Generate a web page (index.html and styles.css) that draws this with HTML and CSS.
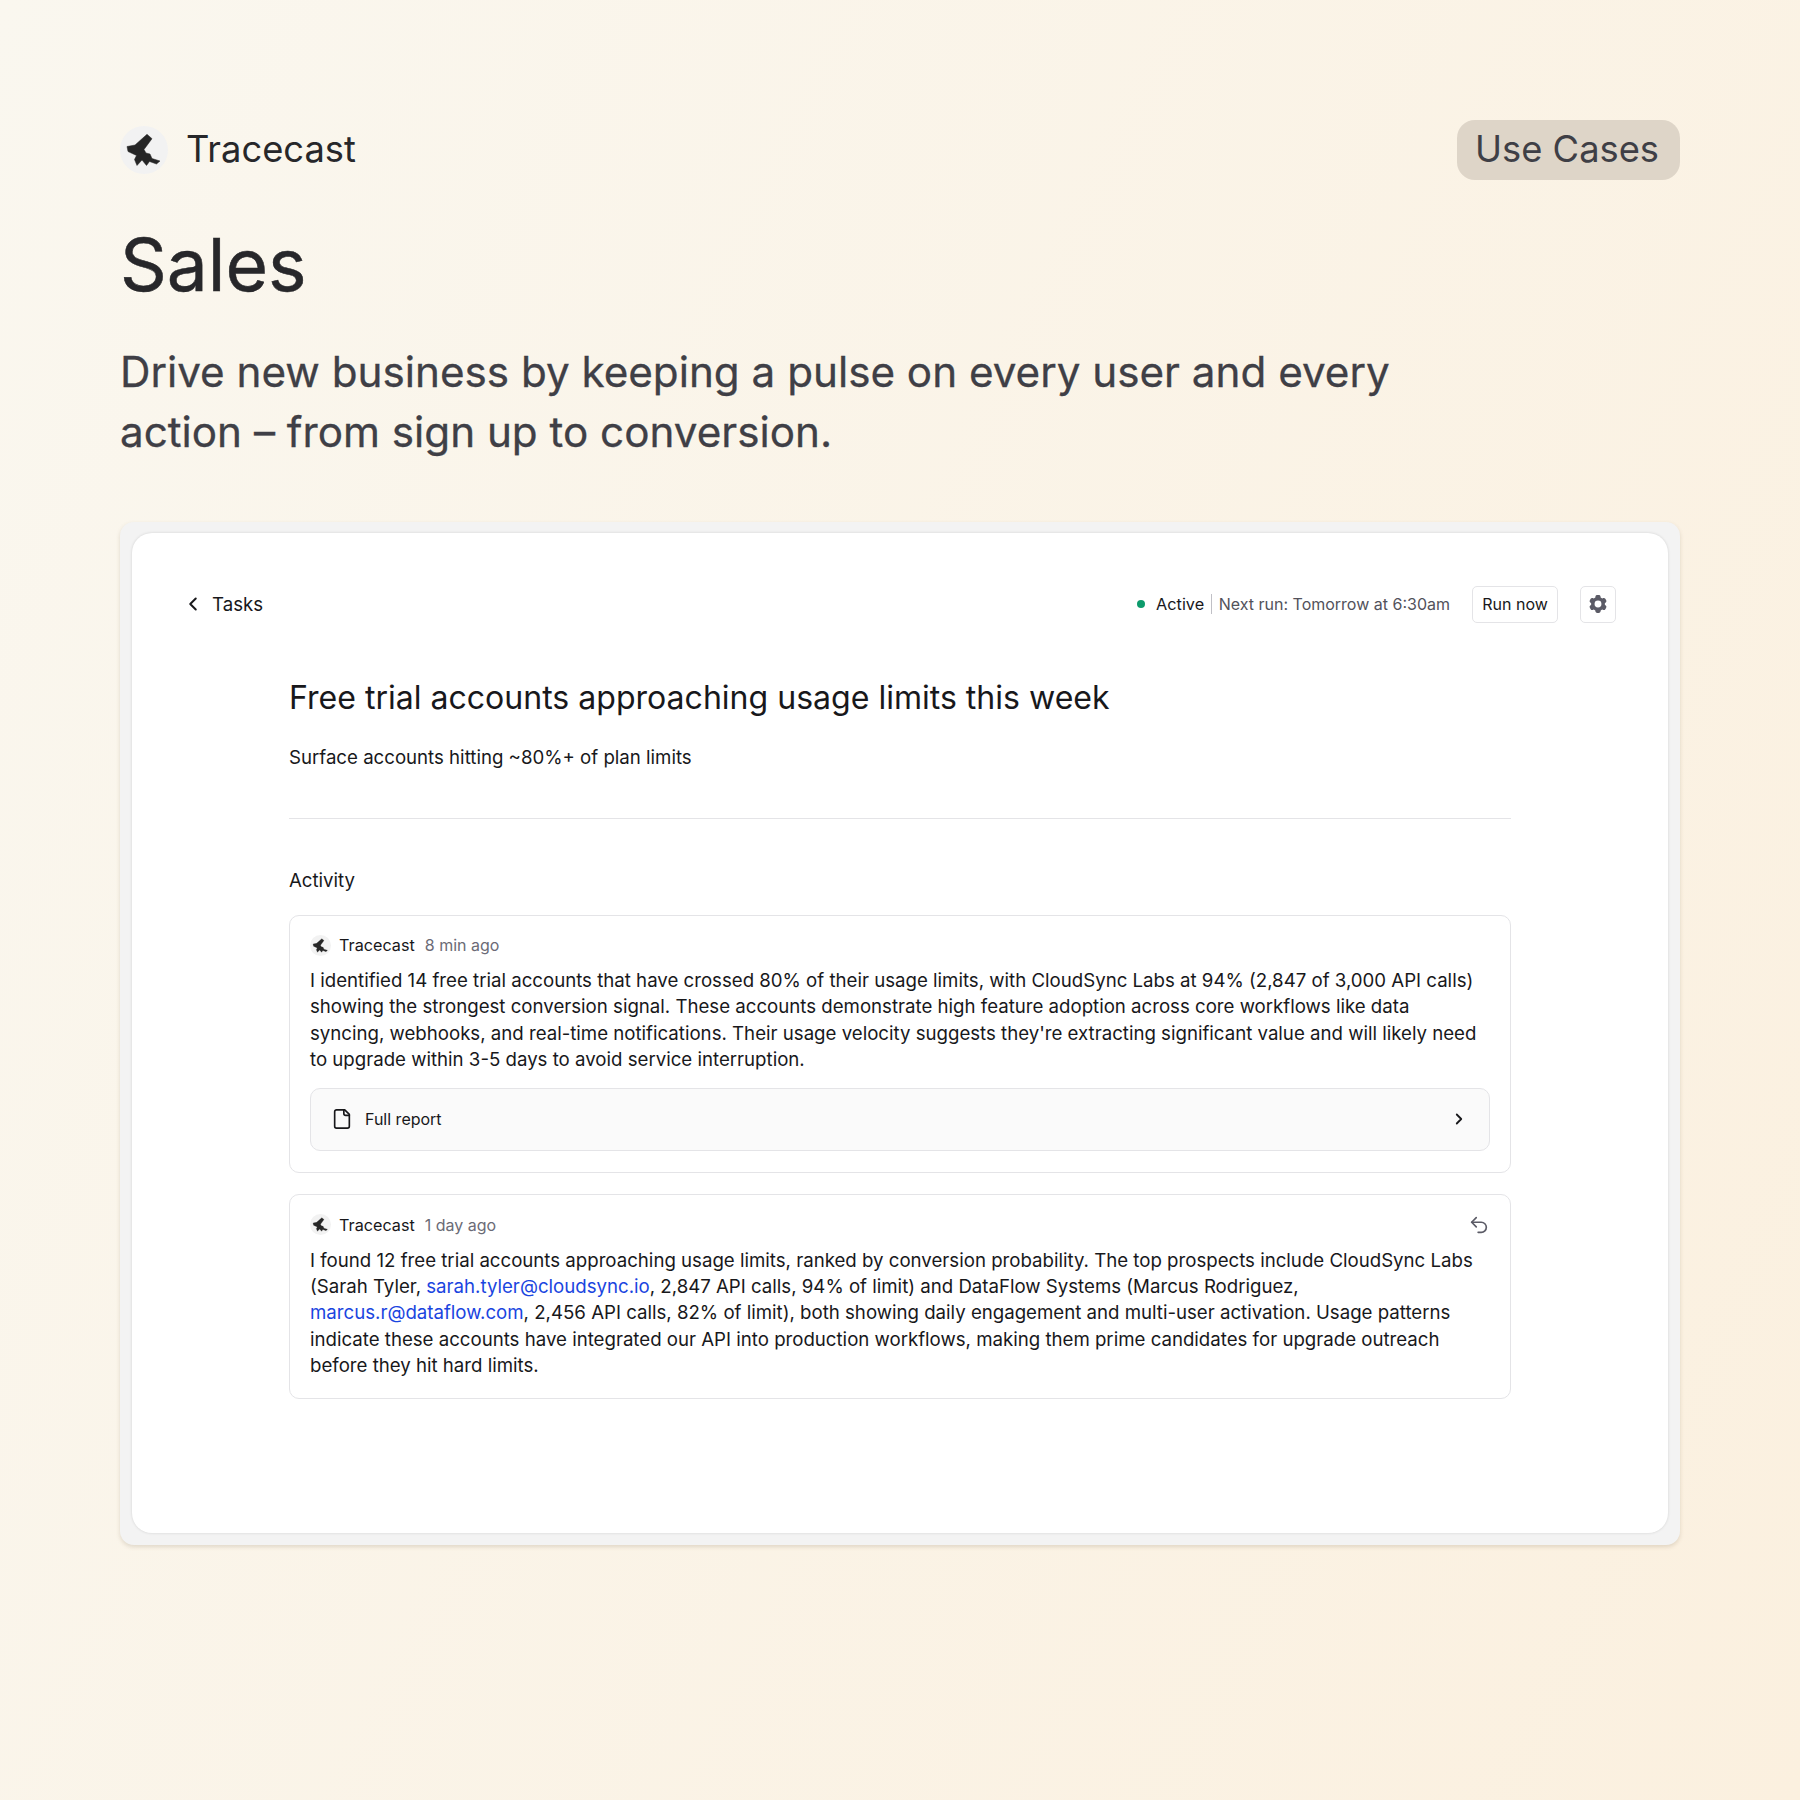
FILE: index.html
```html
<!DOCTYPE html>
<html lang="en">
<head>
<meta charset="utf-8">
<title>Tracecast – Sales</title>
<link rel="stylesheet" href="styles.css">
</head>
<body>
<svg class="defs" width="0" height="0" aria-hidden="true">
  <symbol id="logo" viewBox="0 0 48 48">
    <circle cx="24" cy="24" r="24" fill="#f2f2f2"/>
    <path fill="#262626" stroke="#262626" stroke-width=".5" stroke-linejoin="round" d="M7 20.500 15 19 27 8.300l5 4.400-8 10.800 2 3.500 4 1 2 4.500 8 2.500-3.500 3-7-2.500-3 4-4.500-5.500-5 5.500-2.500-6 2-4-8.500-4z"/>
  </symbol>
</svg>
<main class="page">
  <header class="brandbar">
    <div class="brand">
      <svg class="brand-logo"><use href="#logo"/></svg>
      <span class="brand-name">Tracecast</span>
    </div>
    <span class="pill"><span class="pill-text">Use Cases</span></span>
  </header>
  <h1 class="headline">Sales</h1>
  <p class="lede">Drive new business by keeping a pulse on every user and every action – from sign up to conversion.</p>

  <section class="frame">
    <div class="panel">
      <div class="topbar">
        <a class="back">
          <svg class="back-icon" viewBox="0 0 24 24"><path d="m15 18-6-6 6-6"/></svg>
          <span>Tasks</span>
        </a>
        <div class="status">
          <span class="dot"></span>
          <span class="active">Active</span>
          <span class="sep"></span>
          <span class="next">Next run: Tomorrow at 6:30am</span>
          <button class="btn">Run now</button>
          <button class="icon-btn">
            <svg class="gear" viewBox="0 0 24 24"><path fill-rule="evenodd" clip-rule="evenodd" d="M11.078 2.25c-.917 0-1.699.663-1.85 1.567L9.05 4.889c-.02.12-.115.26-.297.348a7.493 7.493 0 0 0-.986.57c-.166.115-.334.126-.45.083L6.3 5.508a1.875 1.875 0 0 0-2.282.819l-.922 1.597a1.875 1.875 0 0 0 .432 2.385l.84.692c.095.078.17.229.154.43a7.598 7.598 0 0 0 0 1.139c.015.2-.059.352-.153.43l-.841.692a1.875 1.875 0 0 0-.432 2.385l.922 1.597a1.875 1.875 0 0 0 2.282.818l1.019-.382c.115-.043.283-.031.45.082.312.214.641.405.985.57.182.088.277.228.297.35l.178 1.071c.151.904.933 1.567 1.85 1.567h1.844c.916 0 1.699-.663 1.85-1.567l.178-1.072c.02-.12.114-.26.297-.349.344-.165.673-.356.985-.57.167-.114.335-.125.45-.082l1.02.382a1.875 1.875 0 0 0 2.28-.819l.923-1.597a1.875 1.875 0 0 0-.432-2.385l-.84-.692c-.095-.078-.17-.229-.154-.43a7.614 7.614 0 0 0 0-1.139c-.016-.2.059-.352.153-.43l.84-.692c.708-.582.891-1.59.433-2.385l-.922-1.597a1.875 1.875 0 0 0-2.282-.818l-1.02.382c-.114.043-.282.031-.449-.083a7.49 7.49 0 0 0-.985-.57c-.183-.087-.277-.227-.297-.348l-.179-1.072a1.875 1.875 0 0 0-1.85-1.567h-1.843ZM12 15.75a3.75 3.75 0 1 0 0-7.5 3.750 3.750 0 0 0 0 7.5Z"/></svg>
          </button>
        </div>
      </div>

      <div class="content">
        <h2 class="task-title">Free trial accounts approaching usage limits this week</h2>
        <p class="task-sub">Surface accounts hitting ~80%+ of plan limits</p>
        <hr class="rule">
        <h3 class="activity-label">Activity</h3>

        <article class="card">
          <div class="card-head">
            <svg class="mini-logo"><use href="#logo"/></svg>
            <span class="author">Tracecast</span>
            <span class="time">8 min ago</span>
          </div>
          <p class="body">I identified 14 free trial accounts that have crossed 80% of their usage limits, with CloudSync Labs at 94% (2,847 of 3,000 API calls) showing the strongest conversion signal. These accounts demonstrate high feature adoption across core workflows like data syncing, webhooks, and real-time notifications. Their usage velocity suggests they're extracting significant value and will likely need to upgrade within 3-5 days to avoid service interruption.</p>
          <div class="report">
            <svg class="file-icon" viewBox="0 0 24 24"><path d="M15 2H6a2 2 0 0 0-2 2v16a2 2 0 0 0 2 2h12a2 2 0 0 0 2-2V7Z"/><path d="M14 2v4a2 2 0 0 0 2 2h4"/></svg>
            <span class="report-name">Full report</span>
            <svg class="chev" viewBox="0 0 24 24"><path d="m9 18 6-6-6-6"/></svg>
          </div>
        </article>

        <article class="card">
          <div class="card-head">
            <svg class="mini-logo"><use href="#logo"/></svg>
            <span class="author">Tracecast</span>
            <span class="time">1 day ago</span>
            <svg class="undo" viewBox="0 0 24 24"><path d="M9 14 4 9l5-5"/><path d="M4 9h10.500a5.500 5.500 0 0 1 0 11H11"/></svg>
          </div>
          <p class="body">I found 12 free trial accounts approaching usage limits, ranked by conversion probability. The top prospects include CloudSync Labs (Sarah Tyler, <a class="link">sarah.tyler@cloudsync.io</a>, 2,847 API calls, 94% of limit) and DataFlow Systems (Marcus Rodriguez, <a class="link">marcus.r@dataflow.com</a>, 2,456 API calls, 82% of limit), both showing daily engagement and multi-user activation. Usage patterns indicate these accounts have integrated our API into production workflows, making them prime candidates for upgrade outreach before they hit hard limits.</p>
        </article>
      </div>
    </div>
  </section>
</main>
</body>
</html>
```
FILE: styles.css
```css
* { box-sizing: border-box; }
html, body { margin: 0; }
body {
  width: 1800px;
  height: 1800px;
  background: linear-gradient(115deg, #faf7ef 0%, #fbf0df 100%);
  font-family: Inter, "Liberation Sans", sans-serif;
  overflow: hidden;
}
.defs { display: block; height: 0; }
.page { padding: 120px 120px 0; }
.brandbar { display: flex; align-items: center; justify-content: space-between; height: 60px; }
.brand { display: flex; align-items: center; gap: 18px; }
.brand-logo { width: 48px; height: 48px; display: block; }
.brand-name { font-size: 36.3px; color: #27272a; line-height: 1; padding-bottom: 1px; }
.pill {
  height: 60px; padding: 0 21px 0 18px; display: flex; align-items: center;
  background: #ded5c8; border-radius: 18px;
  font-size: 36.3px; color: #3f3f46;
}
.pill-text { line-height: 1; padding-bottom: 1px; }
.headline { margin: 41px 0 0; font-size: 73px; font-weight: 400; line-height: 88px; color: #27272a; -webkit-text-stroke: .5px #27272a; }
.lede { margin: 33px 0 0; width: 1300px; font-size: 42.2px; font-weight: 400; line-height: 60px; color: #3f3f46; -webkit-text-stroke: .3px #3f3f46; }

.frame {
  margin-top: 60px; height: 1023px; padding: 11px 12px 12px;
  background: #f3f3f3; border-radius: 14px;
  box-shadow: 0 2px 4px rgba(120,100,70,.2);
}
.panel {
  height: 100%; background: #fff; border-radius: 20px;
  box-shadow: 0 0 3px rgba(0,0,0,.14);
  padding: 52px 52px 0 50px;
}
.topbar { display: flex; align-items: center; justify-content: space-between; height: 38px; }
.back { display: flex; align-items: center; gap: 8px; font-size: 18.65px; color: #18181b; }
.back-icon { width: 22px; height: 22px; fill: none; stroke: #18181b; stroke-width: 2.2; stroke-linecap: round; stroke-linejoin: round; }
.status { display: flex; align-items: center; font-size: 16px; }
.dot { width: 8px; height: 8px; border-radius: 50%; background: #0d9b6c; margin-right: 11px; }
.active { color: #18181b; font-size: 16.300px; }
.sep { width: 1.5px; height: 20px; background: #c0c0c6; margin: 0 6.500px; }
.next { color: #52525b; }
.btn {
  margin-left: 22px; width: 86px; height: 37px; padding: 0;
  background: #fff; border: 1px solid #e4e4e7; border-radius: 5px;
  font: inherit; color: #18181b;
}
.icon-btn {
  margin-left: 22px; width: 36px; height: 37px; padding: 0;
  display: flex; align-items: center; justify-content: center;
  background: #fff; border: 1px solid #e4e4e7; border-radius: 5px;
}
.gear { width: 22px; height: 22px; fill: #5b5b66; }

.content { padding: 0 105px 0 107px; margin-top: 53px; }
.task-title { margin: 0; font-size: 32.05px; font-weight: 400; line-height: 44px; color: #18181b; }
.task-sub { margin: 24px 0 0; font-size: 18.65px; line-height: 26px; color: #18181b; }
.rule { margin: 48px 0 0; border: 0; border-top: 1px solid #e4e4e7; }
.activity-label { margin: 48px 0 0; font-size: 18.65px; font-weight: 400; line-height: 26px; color: #18181b; }
.card {
  margin-top: 22px; padding: 17px 20px 21px;
  border: 1px solid #e4e4e7; border-radius: 10px; background: #fff;
}
.card + .card { margin-top: 21px; padding: 18px 20px 19px; }
.card-head { display: flex; align-items: center; height: 24px; font-size: 16.2px; }
.mini-logo { width: 21px; height: 21px; display: block; margin-right: 8px; }
.author { color: #18181b; }
.time { margin-left: 10px; font-size: 16px; color: #6b6b76; }
.undo { margin-left: auto; width: 22px; height: 22px; fill: none; stroke: #5b5b66; stroke-width: 1.800; stroke-linecap: round; stroke-linejoin: round; }
.body { margin: 10px 0 0; width: 1172px; font-size: 18.65px; line-height: 26.4px; color: #18181b; }
.link { color: #1a45e0; }
.report {
  margin-top: 15px; height: 63px; padding: 0 21px 0 20px;
  display: flex; align-items: center;
  background: #fafafa; border: 1px solid #e4e4e7; border-radius: 10px;
}
.file-icon { width: 22px; height: 22px; fill: none; stroke: #18181b; stroke-width: 1.800; stroke-linecap: round; stroke-linejoin: round; }
.report-name { margin-left: 12px; font-size: 16px; color: #18181b; }
.chev { margin-left: auto; width: 18px; height: 18px; fill: none; stroke: #18181b; stroke-width: 2.400; stroke-linecap: round; stroke-linejoin: round; }
```
